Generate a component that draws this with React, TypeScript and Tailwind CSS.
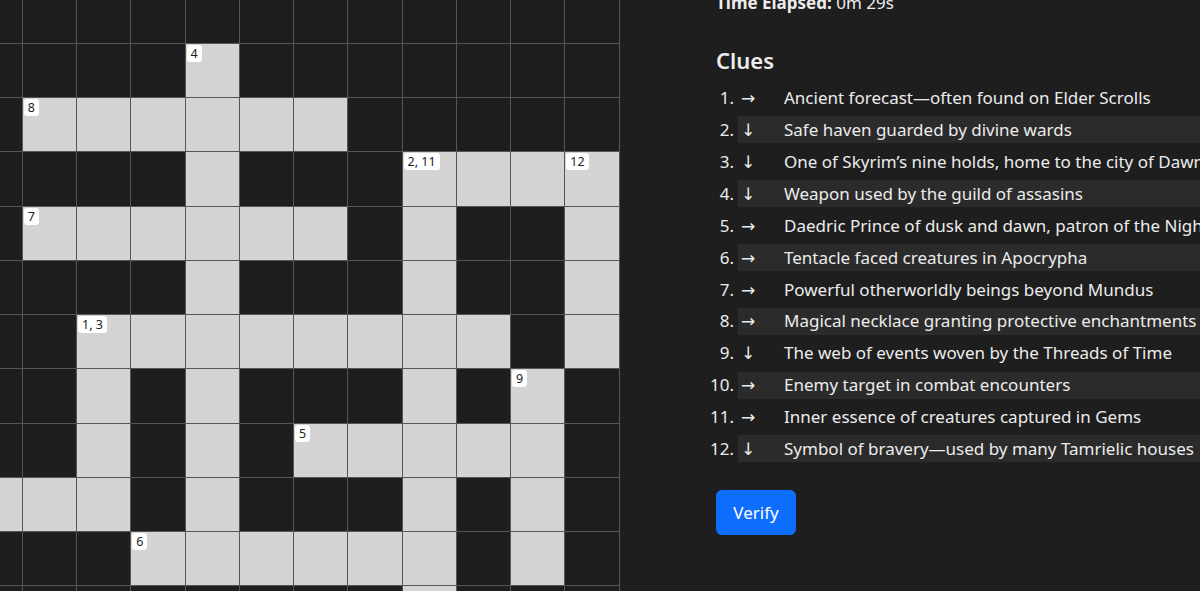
import React from "react";

const LAYOUT = [
  "############",
  "####.#######",
  "#......#####",
  "####.###....",
  "#......#.##.",
  "####.###.##.",
  "##........#.",
  "##.#.###.#.#",
  "##.#.#.....#",
  "...#.###.#.#",
  "###......#.#",
  "########.###",
];

const LABELS: Record<string, string> = {
  "1-4": "4",
  "2-1": "8",
  "3-8": "2, 11",
  "3-11": "12",
  "4-1": "7",
  "6-2": "1, 3",
  "7-10": "9",
  "8-6": "5",
  "10-3": "6",
};

const CLUES: { dir: "across" | "down"; text: string }[] = [
  { dir: "across", text: "Ancient forecast—often found on Elder Scrolls" },
  { dir: "down", text: "Safe haven guarded by divine wards" },
  { dir: "down", text: "One of Skyrim’s nine holds, home to the city of Dawnstar" },
  { dir: "down", text: "Weapon used by the guild of assasins" },
  { dir: "across", text: "Daedric Prince of dusk and dawn, patron of the Nightingales" },
  { dir: "across", text: "Tentacle faced creatures in Apocrypha" },
  { dir: "across", text: "Powerful otherworldly beings beyond Mundus" },
  { dir: "across", text: "Magical necklace granting protective enchantments" },
  { dir: "down", text: "The web of events woven by the Threads of Time" },
  { dir: "across", text: "Enemy target in combat encounters" },
  { dir: "across", text: "Inner essence of creatures captured in Gems" },
  { dir: "down", text: "Symbol of bravery—used by many Tamrielic houses" },
];

function Board() {
  return (
    <div className="grid grid-cols-[repeat(12,53.25px)] auto-rows-[53.25px] gap-px bg-[#565656] p-px w-max">
      {LAYOUT.map((row, r) =>
        row.split("").map((ch, c) => {
          const open = ch === ".";
          const label = LABELS[`${r}-${c}`];
          return (
            <div
              key={`${r}-${c}`}
              className={`relative ${open ? "bg-[#d4d4d4]" : "bg-[#1e1e1e]"}`}
            >
              {label && (
                <span className="absolute left-[1px] top-[1px] rounded-[3px] bg-white px-[4px] text-[12.5px] leading-[17px] text-[#222]">
                  {label}
                </span>
              )}
            </div>
          );
        })
      )}
    </div>
  );
}

export default function App() {
  return (
    <div
      className="flex h-[591px] w-[1200px] overflow-hidden bg-[#1e1e1e] text-[#ececec]"
      style={{ fontFamily: '"Noto Sans", "DejaVu Sans", sans-serif' }}
    >
      <section className="w-[620px] shrink-0 overflow-hidden">
        <div className="-ml-[32.5px] -mt-[11.5px]">
          <Board />
        </div>
      </section>

      <section className="ml-[96px] flex min-w-0 flex-1 flex-col">
        <p className="-mt-[10.5px] h-[26px] text-[17px] leading-[26px]">
          <span className="font-bold">Time Elapsed:</span> 0m 29s
        </p>

        <h2 className="mt-[29.5px] h-[30px] text-[22px] font-semibold leading-[30px]">
          Clues
        </h2>

        <ol className="mt-[9.5px] flex flex-col gap-[4.9px]">
          {CLUES.map((clue, i) => (
            <li key={i} className="flex h-[27px] items-center whitespace-nowrap text-[17px]">
              <span className="-ml-[8px] w-[26px] shrink-0 text-right">{i + 1}.</span>
              <div
                className={`ml-[4px] flex h-full flex-1 items-center ${
                  i % 2 === 1 ? "bg-[#2b2b2b]" : ""
                }`}
              >
                <span className="w-[46px] shrink-0 pl-[3px]">
                  {clue.dir === "across" ? "→" : "↓"}
                </span>
                <span>{clue.text}</span>
              </div>
            </li>
          ))}
        </ol>

        <button className="mt-[27.5px] h-[45px] w-[80px] rounded-[6px] bg-[#0d6efd] text-[17px] text-white">
          Verify
        </button>
      </section>
    </div>
  );
}
